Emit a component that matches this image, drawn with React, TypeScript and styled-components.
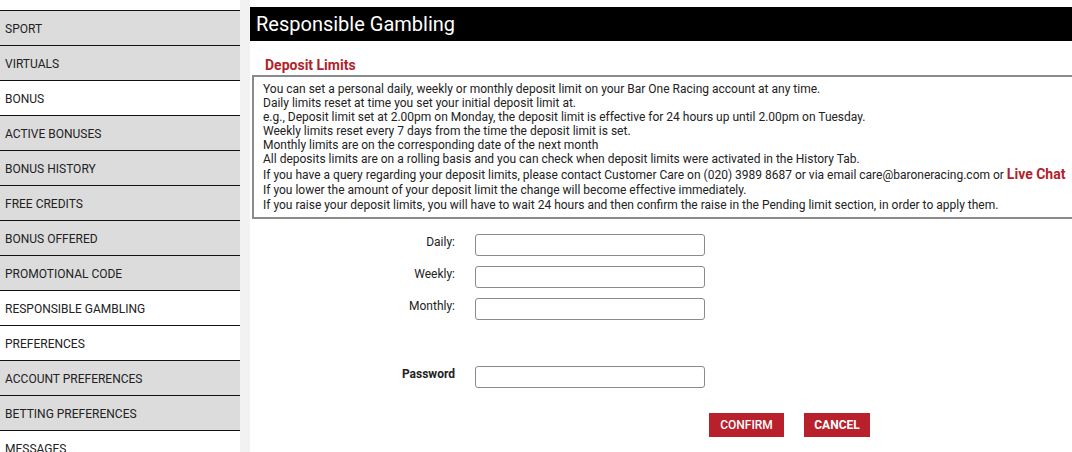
import React from "react";
import styled, { createGlobalStyle } from "styled-components";

const Global = createGlobalStyle`
  html, body { margin: 0; padding: 0; background: #fff; }
  body { font-family: Roboto, "Liberation Sans", Arial, sans-serif; }
  * { box-sizing: border-box; }
`;

const Page = styled.div`
  display: flex;
  width: 1072px;
  height: 452px;
  overflow: hidden;
`;

const Sidebar = styled.nav`
  width: 240px;
  flex: none;
  padding-top: 10px;
  background: #fff;
`;

const NavItem = styled.div<{ $light?: boolean }>`
  height: 35px;
  border-top: 1px solid #111;
  background: ${(p) => (p.$light ? "#fff" : "#dcdcdc")};
  display: flex;
  align-items: center;
  padding-left: 5px;
  padding-top: 2px;
  font-size: 12px;
  color: #222;
  text-transform: uppercase;
`;

const Gutter = styled.div`
  width: 10px;
  flex: none;
  background: #f2f2f2;
`;

const Main = styled.main`
  flex: 1;
  padding-top: 7px;
  min-width: 0;
`;

const Header = styled.h1`
  margin: 0;
  height: 34px;
  background: #000;
  color: #fff;
  font-size: 20px;
  font-weight: 400;
  padding-left: 6px;
  display: flex;
  align-items: center;
`;

const SectionTitle = styled.h2`
  margin: 16px 0 0 15px;
  font-size: 14px;
  font-weight: 700;
  color: #b0232b;
  line-height: 17px;
`;

const InfoBox = styled.div`
  margin: 1px -40px 0 2px;
  border: 2px solid #8a8a8a;
  padding: 5px 9px 5px 9px;
  font-size: 12px;
  color: #222;
  line-height: 14px;
  white-space: nowrap;
`;

const Line = styled.div<{ $gap?: boolean }>`
  margin-top: ${(p) => (p.$gap ? "1px" : "0")};
`;

const ChatLine = styled.div`
  line-height: 16px;
`;

const LiveChat = styled.span`
  color: #b0232b;
  font-weight: 700;
  font-size: 14px;
`;

const Form = styled.div`
  display: grid;
  grid-template-columns: 205px 230px;
  column-gap: 20px;
  row-gap: 10px;
  margin-top: 15px;
`;

const Label = styled.label<{ $bold?: boolean; $top?: number }>`
  text-align: right;
  font-size: 12px;
  color: #222;
  font-weight: ${(p) => (p.$bold ? 700 : 400)};
  padding-top: 1px;
  margin-top: ${(p) => (p.$top ? `${p.$top}px` : "0")};
`;

const Input = styled.input<{ $top?: number }>`
  height: 22px;
  width: 230px;
  border: 1px solid #8a8a8a;
  border-radius: 3px;
  margin: ${(p) => (p.$top ? `${p.$top}px` : "0")} 0 0 0;
  padding: 0 4px;
`;

const Buttons = styled.div`
  display: flex;
  gap: 20px;
  margin: 25px 0 0 459px;
`;

const Button = styled.button<{ $bold?: boolean; $w: number }>`
  width: ${(p) => p.$w}px;
  height: 24px;
  border: none;
  background: #b8202b;
  color: #fff;
  font-family: Roboto, "Liberation Sans", Arial, sans-serif;
  font-size: 12px;
  font-weight: ${(p) => (p.$bold ? 700 : 500)};
  padding: 0;
  text-transform: uppercase;
`;

const navItems: [string, boolean][] = [
  ["Sport", false],
  ["Virtuals", false],
  ["Bonus", true],
  ["Active Bonuses", false],
  ["Bonus History", false],
  ["Free Credits", false],
  ["Bonus Offered", false],
  ["Promotional Code", false],
  ["Responsible Gambling", true],
  ["Preferences", true],
  ["Account Preferences", false],
  ["Betting Preferences", false],
  ["Messages", true],
];

export default function App() {
  return (
    <>
      <Global />
      <Page>
        <Sidebar>
          {navItems.map(([t, light]) => (
            <NavItem key={t} $light={light}>
              {t}
            </NavItem>
          ))}
        </Sidebar>
        <Gutter />
        <Main>
          <Header>Responsible Gambling</Header>
          <SectionTitle>Deposit Limits</SectionTitle>
          <InfoBox>
            <Line>You can set a personal daily, weekly or monthly deposit limit on your Bar One Racing account at any time.</Line>
            <Line>Daily limits reset at time you set your initial deposit limit at.</Line>
            <Line>e.g., Deposit limit set at 2.00pm on Monday, the deposit limit is effective for 24 hours up until 2.00pm on Tuesday.</Line>
            <Line>Weekly limits reset every 7 days from the time the deposit limit is set.</Line>
            <Line>Monthly limits are on the corresponding date of the next month</Line>
            <Line>All deposits limits are on a rolling basis and you can check when deposit limits were activated in the History Tab.</Line>
            <ChatLine>
              If you have a query regarding your deposit limits, please contact Customer Care on (020) 3989 8687 or via email care@baroneracing.com or <LiveChat>Live Chat</LiveChat>
            </ChatLine>
            <Line>If you lower the amount of your deposit limit the change will become effective immediately.</Line>
            <Line $gap>If you raise your deposit limits, you will have to wait 24 hours and then confirm the raise in the Pending limit section, in order to apply them.</Line>
          </InfoBox>
          <Form>
            <Label>Daily:</Label>
            <Input />
            <Label>Weekly:</Label>
            <Input />
            <Label>Monthly:</Label>
            <Input />
            <Label $bold $top={36}>Password</Label>
            <Input $top={36} type="password" />
          </Form>
          <Buttons>
            <Button $w={75}>Confirm</Button>
            <Button $w={66} $bold>Cancel</Button>
          </Buttons>
        </Main>
      </Page>
    </>
  );
}
